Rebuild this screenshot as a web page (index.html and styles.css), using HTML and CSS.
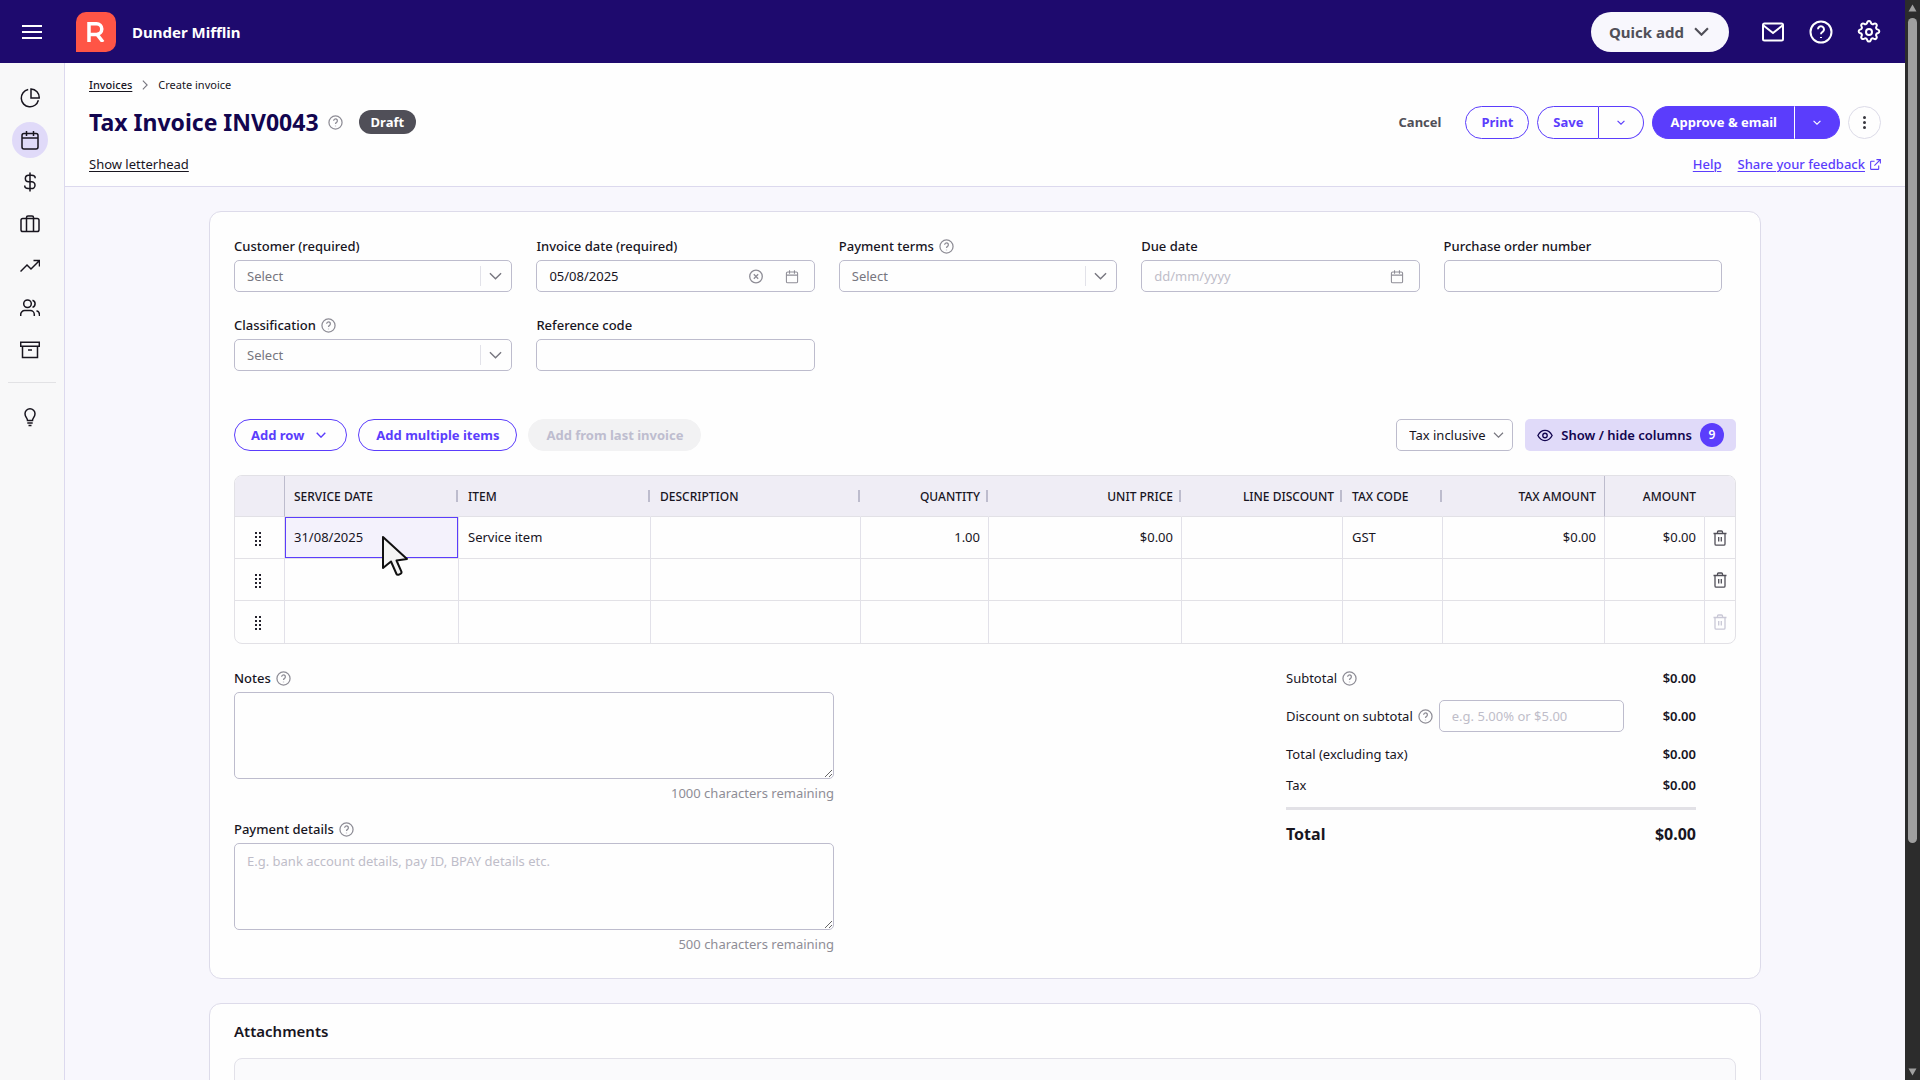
FILE: index.html
```
<!DOCTYPE html>
<html lang="en">
<head>
  <meta charset="UTF-8">
  <meta name="viewport" content="width=device-width, initial-scale=1.0">
  <title>Create invoice | Dunder Mifflin</title>
  <link rel="stylesheet" href="styles.css">
</head>
<body>
  <!-- icon sprite -->
  <svg class="sprite" aria-hidden="true">
    <symbol id="i-menu" viewBox="0 0 20 14"><path d="M0 1h20M0 7h20M0 13h20"/></symbol>
    <symbol id="i-chevron" viewBox="0 0 14 8"><path d="M1 1l6 6 6-6"/></symbol>
    <symbol id="i-mail" viewBox="0 0 24 24"><rect x="2" y="3.500" width="20" height="17" rx="1.500"/><path d="M2.500 5.500L12 13l9.500-7.500"/></symbol>
    <symbol id="i-help" viewBox="0 0 24 24"><circle cx="12" cy="12" r="10.500"/><path d="M9 9.300a3 3 0 1 1 4.600 2.500c-1 .7-1.600 1.200-1.600 2.400M12 17v1"/></symbol>
    <symbol id="i-gear" viewBox="0 0 24 24"><circle cx="12" cy="12" r="3"/><path d="M10.300 2.200a1.800 1.800 0 0 1 3.400 0l.2.700a1.900 1.900 0 0 0 2.700 1.100l.6-.3a1.800 1.800 0 0 1 2.400 2.400l-.3.600a1.900 1.900 0 0 0 1.100 2.700l.7.200a1.800 1.800 0 0 1 0 3.400l-.7.200a1.900 1.900 0 0 0-1.100 2.700l.3.600a1.800 1.800 0 0 1-2.400 2.400l-.6-.3a1.900 1.900 0 0 0-2.700 1.100l-.2.700a1.800 1.800 0 0 1-3.400 0l-.2-.7a1.900 1.900 0 0 0-2.700-1.100l-.6.3a1.800 1.800 0 0 1-2.400-2.400l.3-.6a1.900 1.900 0 0 0-1.100-2.700l-.7-.2a1.800 1.800 0 0 1 0-3.400l.7-.2a1.900 1.900 0 0 0 1.100-2.700l-.3-.6a1.800 1.800 0 0 1 2.400-2.400l.6.300a1.900 1.900 0 0 0 2.700-1.100z"/></symbol>
    <symbol id="i-pie" viewBox="0 0 20 20"><path d="M8.200 1.600a8.700 8.700 0 1 0 10.200 10.700"/><path d="M11 1v9h8.200A8.500 8.500 0 0 0 11 1z"/></symbol>
    <symbol id="i-calendar" viewBox="0 0 20 20"><rect x="2" y="3.500" width="16" height="15.500" rx="2"/><path d="M2 8h16M6.500 1v5M13.500 1v5"/></symbol>
    <symbol id="i-dollar" viewBox="0 0 20 20"><path d="M10 0.500v19M15.200 6.200c0-1.800-1.600-2.900-3.500-2.900H8.600a3.200 3.200 0 0 0 0 6.500h3a3.400 3.400 0 0 1 0 6.800H8.200c-2 0-3.500-1.200-3.500-3"/></symbol>
    <symbol id="i-case" viewBox="0 0 20 20"><rect x="1" y="4.500" width="18" height="13" rx="1.800"/><path d="M6.500 17.500V3.500a1.500 1.500 0 0 1 1.500-1.500h4a1.500 1.500 0 0 1 1.500 1.500v14"/></symbol>
    <symbol id="i-trend" viewBox="0 0 20 20"><path d="M.5 15.500l6.500-6.500 4 4L19 5M13.500 4.500h6v6"/></symbol>
    <symbol id="i-people" viewBox="0 0 20 20"><circle cx="7.500" cy="5.800" r="3.800"/><path d="M.7 18v-1.500a4 4 0 0 1 4-4h5.600a4 4 0 0 1 4 4V18M12.500 2.200a3.800 3.800 0 0 1 0 7.200M16.500 12.800a4 4 0 0 1 3 3.900V18"/></symbol>
    <symbol id="i-archive" viewBox="0 0 20 20"><path d="M.7 2.200h18.600v4H.7zM2.500 6.200v11.300h15V6.200M8 10h4"/></symbol>
    <symbol id="i-bulb" viewBox="0 0 20 20"><path d="M7.500 13.500c0-2.500-2.500-3.400-2.500-6.700a5 5 0 0 1 10 0c0 3.300-2.500 4.200-2.500 6.700zM7.300 16h5.400M8.500 18.500h3"/></symbol>
    <symbol id="i-external" viewBox="0 0 12 12"><path d="M5 2.500H1.500a.8.800 0 0 0-.8.800v7.200c0 .4.400.8.800.8h7.200c.4 0 .8-.4.800-.8V7M7 .7h4.300V5M11 1L4.800 7.200"/></symbol>
    <symbol id="i-clear" viewBox="0 0 16 16"><circle cx="8" cy="8" r="7.200"/><path d="M5.500 5.500l5 5M10.500 5.500l-5 5"/></symbol>
    <symbol id="i-eye" viewBox="0 0 18 14"><path d="M1 7c1.800-3.500 4.600-5.700 8-5.700S15.200 3.500 17 7c-1.800 3.500-4.600 5.700-8 5.700S2.800 10.500 1 7z"/><circle cx="9" cy="7" r="2.500"/></symbol>
    <symbol id="i-trash" viewBox="0 0 14 16"><path d="M.5 3.500h13M4.500 3.300V2a1 1 0 0 1 1-1h3a1 1 0 0 1 1 1v1.300M2 3.700V14a1.200 1.200 0 0 0 1.200 1.200h7.600A1.200 1.200 0 0 0 12 14V3.700M5.700 7v4.500M8.300 7v4.500"/></symbol>
    <symbol id="i-grip" viewBox="0 0 8 14"><path d="M1 0h2v2H1zM5 0h2v2H5zM1 4h2v2H1zM5 4h2v2H5zM1 8h2v2H1zM5 8h2v2H5zM1 12h2v2H1zM5 12h2v2H5z"/></symbol>
  </svg>

  <div class="window">
    <div class="app">
      <header class="topbar">
        <button class="icon-btn menu-btn" aria-label="Menu"><svg class="icon"><use href="#i-menu"/></svg></button>
        <div class="logo">
          <svg viewBox="0 0 18 20"><path d="M2 20V1.800h7.500a5.300 5.300 0 0 1 0 10.600H2M10 12.400L16 20"/></svg>
        </div>
        <span class="company">Dunder Mifflin</span>
        <div class="topbar-actions">
          <button class="quick-add">Quick add <svg class="icon"><use href="#i-chevron"/></svg></button>
          <button class="icon-btn" aria-label="Messages"><svg class="icon"><use href="#i-mail"/></svg></button>
          <button class="icon-btn" aria-label="Help"><svg class="icon"><use href="#i-help"/></svg></button>
          <button class="icon-btn" aria-label="Settings"><svg class="icon"><use href="#i-gear"/></svg></button>
        </div>
      </header>

      <div class="body">
        <nav class="sidebar" aria-label="Main">
          <a href="#" aria-label="Dashboard"><svg class="icon"><use href="#i-pie"/></svg></a>
          <a href="#" class="active" aria-label="Invoices"><svg class="icon"><use href="#i-calendar"/></svg></a>
          <a href="#" aria-label="Money"><svg class="icon"><use href="#i-dollar"/></svg></a>
          <a href="#" aria-label="Business"><svg class="icon"><use href="#i-case"/></svg></a>
          <a href="#" aria-label="Reports"><svg class="icon"><use href="#i-trend"/></svg></a>
          <a href="#" aria-label="Contacts"><svg class="icon"><use href="#i-people"/></svg></a>
          <a href="#" aria-label="Archive"><svg class="icon"><use href="#i-archive"/></svg></a>
          <hr>
          <a href="#" aria-label="Tips"><svg class="icon"><use href="#i-bulb"/></svg></a>
        </nav>

        <main class="main">
          <section class="page-head">
            <div class="breadcrumb">
              <a href="#">Invoices</a>
              <svg class="icon"><use href="#i-chevron"/></svg>
              <span>Create invoice</span>
            </div>
            <div class="title-row">
              <h1>Tax Invoice INV0043</h1>
              <svg class="icon hint"><use href="#i-help"/></svg>
              <span class="status">Draft</span>
              <div class="title-actions">
                <button class="btn-text">Cancel</button>
                <button class="btn">Print</button>
                <div class="split">
                  <button class="btn">Save</button>
                  <button class="btn" aria-label="More save options"><svg class="icon"><use href="#i-chevron"/></svg></button>
                </div>
                <div class="split primary">
                  <button class="btn">Approve &amp; email</button>
                  <button class="btn" aria-label="More approve options"><svg class="icon"><use href="#i-chevron"/></svg></button>
                </div>
                <button class="more" aria-label="More"><span></span><span></span><span></span></button>
              </div>
            </div>
            <div class="sub-row">
              <a href="#" class="letterhead">Show letterhead</a>
              <a href="#" class="help-link">Help</a>
              <a href="#" class="help-link">Share your feedback</a>
              <svg class="icon"><use href="#i-external"/></svg>
            </div>
          </section>

          <section class="card">
            <div class="fields">
              <div class="field">
                <label for="customer">Customer (required)</label>
                <div class="control">
                  <select id="customer"><option>Select</option></select>
                  <span class="arrow"><svg class="icon"><use href="#i-chevron"/></svg></span>
                </div>
              </div>
              <div class="field">
                <label for="invoice-date">Invoice date (required)</label>
                <div class="control">
                  <input id="invoice-date" type="text" value="05/08/2025">
                  <button aria-label="Clear date"><svg class="icon"><use href="#i-clear"/></svg></button>
                  <button aria-label="Pick date"><svg class="icon"><use href="#i-calendar"/></svg></button>
                </div>
              </div>
              <div class="field">
                <label for="terms">Payment terms <svg class="icon hint"><use href="#i-help"/></svg></label>
                <div class="control">
                  <select id="terms"><option>Select</option></select>
                  <span class="arrow"><svg class="icon"><use href="#i-chevron"/></svg></span>
                </div>
              </div>
              <div class="field">
                <label for="due-date">Due date</label>
                <div class="control">
                  <input id="due-date" type="text" placeholder="dd/mm/yyyy">
                  <button aria-label="Pick due date"><svg class="icon"><use href="#i-calendar"/></svg></button>
                </div>
              </div>
              <div class="field">
                <label for="po">Purchase order number</label>
                <div class="control"><input id="po" type="text"></div>
              </div>
              <div class="field">
                <label for="classification">Classification <svg class="icon hint"><use href="#i-help"/></svg></label>
                <div class="control">
                  <select id="classification"><option>Select</option></select>
                  <span class="arrow"><svg class="icon"><use href="#i-chevron"/></svg></span>
                </div>
              </div>
              <div class="field">
                <label for="reference">Reference code</label>
                <div class="control"><input id="reference" type="text"></div>
              </div>
            </div>

            <div class="toolbar">
              <button class="btn">Add row <svg class="icon"><use href="#i-chevron"/></svg></button>
              <button class="btn">Add multiple items</button>
              <button class="btn" disabled>Add from last invoice</button>
              <div class="toolbar-right">
                <div class="control tax-mode">
                  <select aria-label="Tax mode"><option>Tax inclusive</option></select>
                  <svg class="icon"><use href="#i-chevron"/></svg>
                </div>
                <button class="columns-btn">
                  <svg class="icon"><use href="#i-eye"/></svg>
                  Show / hide columns
                  <span class="count">9</span>
                </button>
              </div>
            </div>

            <div class="grid-wrap">
              <table class="lines">
                <colgroup>
                  <col class="c-grip"><col class="c-date"><col class="c-item"><col class="c-desc">
                  <col class="c-qty"><col class="c-price"><col class="c-disc"><col class="c-code">
                  <col class="c-tax"><col class="c-amount"><col class="c-del">
                </colgroup>
                <thead>
                  <tr>
                    <th class="pinned"></th>
                    <th class="sep">Service date</th>
                    <th class="sep">Item</th>
                    <th class="sep">Description</th>
                    <th class="sep num">Quantity</th>
                    <th class="sep num">Unit price</th>
                    <th class="sep num">Line discount</th>
                    <th class="sep">Tax code</th>
                    <th class="pinned num">Tax amount</th>
                    <th class="num">Amount</th>
                    <th></th>
                  </tr>
                </thead>
                <tbody>
                  <tr>
                    <td class="grip"><svg class="icon"><use href="#i-grip"/></svg></td>
                    <td class="selected">31/08/2025
                      <svg class="cursor" viewBox="0 0 28 42"><path d="M2 2v31l8-6.500 5.500 12.500c.8 1.800 5.500 0 5-2.200L15.500 25.500l10.500-1.500z"/></svg>
                    </td>
                    <td>Service item</td>
                    <td></td>
                    <td class="num">1.00</td>
                    <td class="num">$0.00</td>
                    <td></td>
                    <td>GST</td>
                    <td class="num">$0.00</td>
                    <td class="num">$0.00</td>
                    <td class="del"><button aria-label="Delete row"><svg class="icon"><use href="#i-trash"/></svg></button></td>
                  </tr>
                  <tr>
                    <td class="grip"><svg class="icon"><use href="#i-grip"/></svg></td>
                    <td></td><td></td><td></td><td></td><td></td><td></td><td></td><td></td><td></td>
                    <td class="del"><button aria-label="Delete row"><svg class="icon"><use href="#i-trash"/></svg></button></td>
                  </tr>
                  <tr>
                    <td class="grip"><svg class="icon"><use href="#i-grip"/></svg></td>
                    <td></td><td></td><td></td><td></td><td></td><td></td><td></td><td></td><td></td>
                    <td class="del"><button aria-label="Delete row" disabled><svg class="icon"><use href="#i-trash"/></svg></button></td>
                  </tr>
                </tbody>
              </table>
            </div>

            <div class="summary">
              <div class="notes">
                <div class="field">
                  <label for="notes">Notes <svg class="icon hint"><use href="#i-help"/></svg></label>
                  <textarea id="notes"></textarea>
                  <span class="remaining">1000 characters remaining</span>
                </div>
                <div class="field">
                  <label for="payment">Payment details <svg class="icon hint"><use href="#i-help"/></svg></label>
                  <textarea id="payment" placeholder="E.g. bank account details, pay ID, BPAY details etc."></textarea>
                  <span class="remaining">500 characters remaining</span>
                </div>
              </div>

              <div class="totals">
                <div class="total-row">
                  <span>Subtotal <svg class="icon hint"><use href="#i-help"/></svg></span>
                  <b>$0.00</b>
                </div>
                <div class="total-row discount">
                  <label for="discount">Discount on subtotal <svg class="icon hint"><use href="#i-help"/></svg></label>
                  <div class="control"><input id="discount" type="text" placeholder="e.g. 5.00% or $5.00"></div>
                  <b>$0.00</b>
                </div>
                <div class="total-row"><span>Total (excluding tax)</span><b>$0.00</b></div>
                <div class="total-row"><span>Tax</span><b>$0.00</b></div>
                <div class="total-row grand"><span>Total</span><b>$0.00</b></div>
              </div>
            </div>
          </section>

          <section class="card">
            <h2>Attachments</h2>
            <div class="dropzone"></div>
          </section>
        </main>
      </div>
    </div>

    <div class="scrollbar">
      <svg viewBox="0 0 9 8"><path d="M4.500 0.500L8.500 7.500h-8z"/></svg>
      <div class="track"><div class="thumb"></div></div>
      <svg viewBox="0 0 9 8"><path d="M4.500 7.500L.5.500h8z"/></svg>
    </div>
  </div>
</body>
</html>
```

FILE: styles.css
```
* {
  box-sizing: border-box;
}

body {
  margin: 0;
  font-family: "Noto Sans", "Open Sans", sans-serif;
  font-size: 13px;
  line-height: 20px;
  color: #18151f;
  background: #f8f7fd;
}

button,
input,
select,
textarea {
  font: inherit;
  color: inherit;
  margin: 0;
}

button {
  border: none;
  background: none;
  padding: 0;
  cursor: pointer;
}

a {
  color: inherit;
  text-underline-offset: 2px;
}

.sprite {
  display: none;
}

.icon {
  flex: none;
  fill: none;
  stroke: currentColor;
  stroke-width: 1.5;
}

.hint {
  width: 15px;
  height: 15px;
  color: #8e8d96;
  stroke-width: 2;
}

.window {
  display: flex;
  height: 100vh;
  overflow: hidden;
}

.app {
  flex: 1;
  min-width: 0;
  display: flex;
  flex-direction: column;
}

/* top bar */
.topbar {
  flex: none;
  display: flex;
  align-items: center;
  height: 63px;
  padding: 0 24px 0 22px;
  background: #1e0a6e;
  color: #fff;
}

.icon-btn {
  display: flex;
}

.icon-btn .icon {
  width: 24px;
  height: 24px;
  stroke-width: 2;
}

.menu-btn .icon {
  width: 20px;
  height: 14px;
}

.logo {
  display: flex;
  align-items: center;
  justify-content: center;
  width: 40px;
  height: 40px;
  margin: 0 16px 0 34px;
  background: #ff5546;
  border-radius: 10px 10px 10px 0;
}

.logo svg {
  width: 18px;
  height: 20px;
  fill: none;
  stroke: #fff;
  stroke-width: 3.5;
}

.company {
  font-size: 15px;
  font-weight: 700;
}

.topbar-actions {
  display: flex;
  align-items: center;
  gap: 24px;
  margin-left: auto;
}

.quick-add {
  display: flex;
  align-items: center;
  gap: 10px;
  height: 40px;
  margin-right: 8px;
  padding: 0 20px 0 18px;
  border-radius: 20px;
  background: #f8f7fd;
  color: #504f58;
  font-size: 15px;
  font-weight: 700;
}

.quick-add .icon {
  width: 15px;
  height: 9px;
  stroke-width: 2;
}

/* sidebar */
.body {
  flex: 1;
  display: flex;
  min-height: 0;
}

.sidebar {
  flex: none;
  display: flex;
  flex-direction: column;
  gap: 6px;
  width: 65px;
  padding: 17px 8px;
  background: #f8f8f9;
  border-right: 1px solid #dcd9ee;
}

.sidebar a {
  display: flex;
  align-items: center;
  justify-content: center;
  width: 36px;
  height: 36px;
  margin-left: 4px;
  border-radius: 50%;
}

.sidebar .active {
  background: #e0daf9;
}

.sidebar .icon {
  width: 20px;
  height: 20px;
}

.sidebar hr {
  width: 48px;
  margin: 8px 0 10px;
  border: none;
  border-top: 1px solid #e2e2e5;
}

/* page heading */
.main {
  flex: 1;
  min-width: 0;
  overflow: hidden;
}

.page-head {
  padding: 12px 24px;
  background: #fefefe;
  border-bottom: 1px solid #dcd9ee;
}

.breadcrumb {
  display: flex;
  align-items: center;
  gap: 8px;
  font-size: 11px;
}

.breadcrumb a {
  font-weight: 500;
}

.breadcrumb .icon {
  width: 10px;
  height: 6px;
  color: #77767f;
  transform: rotate(-90deg);
}

.title-row {
  display: flex;
  align-items: center;
  height: 34px;
  margin-top: 10px;
}

h1 {
  margin: 0 9px 0 0;
  font-size: 23px;
  line-height: 32px;
  font-weight: 700;
  color: #12054f;
}

.status {
  margin-left: 16px;
  padding: 2px 12px;
  border-radius: 12px;
  background: #504f58;
  color: #fff;
  font-weight: 700;
}

.title-actions {
  display: flex;
  align-items: center;
  gap: 8px;
  margin-left: auto;
}

.btn {
  display: flex;
  align-items: center;
  gap: 12px;
  height: 33px;
  padding: 0 15px;
  border: 1px solid #5b3dfc;
  border-radius: 17px;
  background: #fefefe;
  color: #5b3dfc;
  font-weight: 700;
}

.btn .icon {
  width: 10px;
  height: 6px;
  stroke-width: 2;
}

.btn:disabled {
  border-color: #f2f2f3;
  background: #f2f2f3;
  color: #bebdcf;
}

.btn-text {
  margin-right: 16px;
  color: #504f58;
  font-weight: 700;
}

.split {
  display: flex;
}

.split .btn:first-child {
  border-radius: 17px 0 0 17px;
}

.split .btn:last-child {
  padding: 0 18px;
  border-left: none;
  border-radius: 0 17px 17px 0;
}

.split .icon {
  width: 8px;
  height: 5px;
}

.primary .btn {
  background: #5b3dfc;
  color: #fff;
}

.primary .btn:first-child {
  padding: 0 17px;
  border-right-color: #fff;
}

.more {
  display: flex;
  flex-direction: column;
  align-items: center;
  justify-content: center;
  gap: 2px;
  width: 33px;
  height: 33px;
  border: 1px solid #dcdbe8;
  border-radius: 50%;
}

.more span {
  width: 3px;
  height: 3px;
  border-radius: 50%;
  background: #38373f;
}

.sub-row {
  display: flex;
  align-items: center;
  gap: 16px;
  margin-top: 15px;
}

.letterhead {
  margin-right: auto;
}

.sub-row a {
  text-decoration-thickness: 1px;
}

.help-link {
  color: #5b3dfc;
  font-weight: 500;
}

.sub-row .icon {
  width: 11px;
  height: 11px;
  margin-left: -11px;
  color: #5b3dfc;
  stroke-width: 1.2;
}

/* cards */
.card {
  max-width: 1552px;
  margin: 24px auto;
  padding: 24px;
  border: 1px solid #dddbea;
  border-radius: 12px;
  background: #fefefe;
}

.fields {
  display: grid;
  grid-template-columns: repeat(5, 1fr);
  gap: 23px 24px;
  margin-right: 14px;
}

.field {
  display: flex;
  flex-direction: column;
}

.field label {
  display: flex;
  align-items: center;
  gap: 5px;
  height: 20px;
  margin-bottom: 4px;
  font-weight: 500;
}

.control {
  position: relative;
  display: flex;
  align-items: center;
  height: 32px;
  border: 1px solid #bdbccd;
  border-radius: 5px;
  background: #fefefe;
}

.control input,
.control select {
  flex: 1;
  min-width: 0;
  height: 30px;
  padding: 0 12px;
  border: none;
  outline: none;
  background: none;
}

.control select {
  appearance: none;
  color: #77767f;
}

.control button {
  display: flex;
  margin-right: 15px;
  color: #8e8d96;
}

.control button + button {
  margin-left: 7px;
}

.control .icon {
  width: 14px;
  height: 15px;
}

.control .arrow {
  display: flex;
  align-items: center;
  height: 20px;
  padding: 0 9px 0 8px;
  border-left: 1px solid #e2e2e9;
  color: #77767f;
}

.arrow .icon {
  width: 13px;
  height: 8px;
}

::placeholder {
  color: #bebdc9;
  opacity: 1;
}

/* line items */
.toolbar {
  display: flex;
  align-items: flex-start;
  gap: 11px;
  margin-top: 48px;
}

.toolbar-right {
  display: flex;
  gap: 12px;
  margin-left: auto;
}

.toolbar .btn {
  height: 32px;
  padding: 0 17px;
}

.toolbar .btn:first-child {
  padding-left: 16px;
  padding-right: 20px;
}

.tax-mode select {
  padding-right: 26px;
  color: inherit;
}

.tax-mode .icon {
  position: absolute;
  right: 8px;
  width: 11px;
  height: 6px;
  color: #77767f;
  pointer-events: none;
}

.columns-btn {
  display: flex;
  align-items: center;
  gap: 8px;
  height: 32px;
  padding: 0 12px;
  border-radius: 5px;
  background: #e0daf9;
  color: #12054f;
  font-weight: 600;
}

.columns-btn .icon {
  width: 16px;
  height: 13px;
}

.count {
  width: 24px;
  height: 24px;
  border-radius: 50%;
  background: #5b3dfc;
  color: #fff;
  font-size: 12px;
  line-height: 24px;
}

.grid-wrap {
  margin-top: 24px;
  border: 1px solid #e2e1e6;
  border-radius: 8px;
}

.lines {
  width: 100%;
  table-layout: fixed;
  border-collapse: separate;
  border-spacing: 0;
}

.c-grip { width: 50px; }
.c-date { width: 174px; }
.c-item { width: 192px; }
.c-qty { width: 128px; }
.c-price { width: 193px; }
.c-disc { width: 161px; }
.c-code { width: 100px; }
.c-tax { width: 162px; }
.c-amount { width: 100px; }
.c-del { width: 30px; }

.lines th,
.lines td {
  position: relative;
  height: 42px;
  padding: 0 8px 2px 9px;
  border-right: 1px solid #e2e1e9;
  border-bottom: 1px solid #e2e1e6;
  text-align: left;
  font-weight: 400;
}

.lines th {
  height: 41px;
  padding: 2px 8px 0 9px;
  border-right-color: transparent;
  background: #efedf5;
  font-size: 12px;
  font-weight: 500;
  text-transform: uppercase;
}

.lines th:first-child {
  border-top-left-radius: 7px;
}

.lines th:last-child {
  border-top-right-radius: 7px;
}

.lines th.pinned {
  border-right-color: #bdbccd;
}

.lines th.sep::after {
  content: "";
  position: absolute;
  top: 14px;
  right: 0;
  width: 2px;
  height: 12px;
  background: #bdbccd;
}

.lines .num {
  text-align: right;
}

.lines td:last-child,
.lines th:last-child {
  border-right: none;
}

.lines tbody tr:last-child td {
  border-bottom: none;
}

.lines td.selected {
  background: #f4f2fc;
  box-shadow: 0 0 0 1px #5b3dfc inset;
}

.lines td.grip,
.lines td.del {
  padding: 0;
  text-align: center;
}

.lines td.grip {
  padding-right: 3px;
}

.grip .icon {
  display: block;
  width: 8px;
  height: 14px;
  margin: 2px auto 0;
  fill: #24222c;
  stroke: none;
}

.del button {
  display: block;
  margin: 0 auto;
  color: #504f58;
}

.del button:disabled {
  color: #c9c8d6;
}

.del .icon {
  display: block;
  width: 14px;
  height: 16px;
  stroke-width: 1.3;
}

.cursor {
  position: absolute;
  left: 96px;
  top: 18px;
  z-index: 2;
  width: 28px;
  height: 42px;
  fill: #f4f4f4;
  stroke: #111;
  stroke-width: 2;
  stroke-linejoin: round;
}

/* notes and totals */
.summary {
  display: flex;
  justify-content: space-between;
  margin-top: 24px;
}

.notes {
  display: flex;
  flex-direction: column;
  gap: 16px;
  width: 600px;
}

textarea {
  height: 87px;
  padding: 7px 12px;
  border: 1px solid #bdbccd;
  border-radius: 5px;
  background: #fefefe;
  resize: vertical;
}

.remaining {
  margin-top: 4px;
  text-align: right;
  color: #8e8d96;
}

.totals {
  width: 410px;
  margin-right: 40px;
}

.total-row {
  display: flex;
  align-items: center;
  justify-content: space-between;
  height: 20px;
  margin-bottom: 11px;
}

.total-row span,
.total-row label {
  display: flex;
  align-items: center;
  gap: 5px;
}

.total-row b {
  font-weight: 600;
}

.discount {
  height: 32px;
  margin: 12px 0;
}

.discount .control {
  width: 185px;
  margin: 0 auto 0 6px;
}

.grand {
  height: auto;
  margin-top: 12px;
  padding-top: 12px;
  border-top: 3px solid #e2e1e6;
  font-size: 16px;
  line-height: 24px;
}

.grand,
.grand b {
  font-weight: 700;
}

h2 {
  margin: -9px 0 15px;
  font-size: 15px;
  line-height: 24px;
  font-weight: 600;
}

.dropzone {
  height: 120px;
  border: 1px solid #e2e1e9;
  border-radius: 8px;
  background: #fafafc;
}

/* window scrollbar */
.scrollbar {
  flex: none;
  display: flex;
  flex-direction: column;
  align-items: center;
  width: 15px;
  padding: 4px 0;
  background: #2c2c2c;
}

.scrollbar svg {
  width: 9px;
  height: 8px;
  fill: #9f9f9f;
}

.track {
  flex: 1;
  padding: 6px 0;
}

.thumb {
  width: 9px;
  height: 79%;
  border-radius: 5px;
  background: #9f9f9f;
}
```
